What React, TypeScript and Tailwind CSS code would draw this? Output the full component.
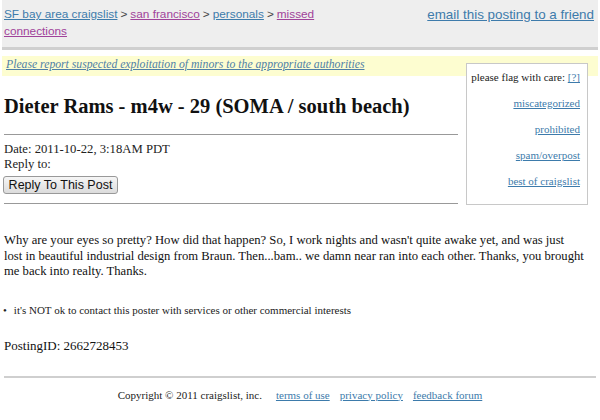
import React from 'react';

const serif = { fontFamily: '"Liberation Serif", "Times New Roman", serif' };

function Crumb({ children, visited = false }: { children: React.ReactNode; visited?: boolean }) {
  return <a className={visited ? 'underline text-[#a0429a]' : 'underline text-[#3d7bab]'}>{children}</a>;
}

function Sep() {
  return <span className="mx-[3px]">&gt;</span>;
}

const flagLinks = ['miscategorized', 'prohibited', 'spam/overpost', 'best of craigslist'];

export default function App() {
  return (
    <div className="relative w-[600px] h-[420px] overflow-hidden bg-white text-[#222]" style={serif}>
      <div className="mx-[2px] flex justify-between bg-[#eeeeee] border-b-[3px] border-[#cfcfcf] pl-[2px] pr-[4px] pt-[6px] h-[50px] font-['Liberation_Sans',Arial,sans-serif] leading-[17px] text-[#444]">
        <div className="w-[330px] text-[11.8px]">
          <div>
            <Crumb>SF bay area craigslist</Crumb>
            <Sep />
            <Crumb visited>san francisco</Crumb>
            <Sep />
            <Crumb>personals</Crumb>
            <Sep />
            <Crumb visited>missed</Crumb>
          </div>
          <div>
            <Crumb visited>connections</Crumb>
          </div>
        </div>
        <div className="text-[13.4px]">
          <Crumb>email this posting to a friend</Crumb>
        </div>
      </div>

      <div className="mx-[2px] mt-[6px] h-[20px] bg-[#fdfdd0] pl-[4px] pt-[2px] text-[11.7px] italic leading-[14px]">
        <a className="underline text-[#4f7fa6]">Please report suspected exploitation of minors to the appropriate authorities</a>
      </div>

      <div className="absolute left-[466px] top-[63px] w-[122px] h-[142px] border border-[#c8c8c8] bg-white pr-[7px] pt-[6px] text-right text-[11px] leading-[14px]">
        <div className="text-[#222]">
          please flag with care: <a className="underline text-[#3d7bab]">[?]</a>
        </div>
        <div className="mt-[12px] flex flex-col gap-[12px]">
          {flagLinks.map((l) => (
            <a key={l} className="underline text-[#3d7bab]">
              {l}
            </a>
          ))}
        </div>
      </div>

      <div className="px-[4px]">
        <h2 className="mt-[17px] w-[454px] text-[20.5px] font-bold leading-[26px] text-[#111]">Dieter Rams - m4w - 29 (SOMA / south beach)</h2>
        <hr className="mt-[15px] w-[454px] border-t border-[#999]" />
        <div className="mt-[7px] text-[12.7px] leading-[15px]">Date: 2011-10-22, 3:18AM PDT</div>
        <div className="text-[12.7px] leading-[15px]">Reply to:</div>
        <button className="mt-[1px] ml-[-1px] h-[18px] w-[115px] rounded-[3px] border border-[#999] bg-gradient-to-b from-[#f6f6f6] to-[#dcdcdc] font-['Liberation_Sans',Arial,sans-serif] text-[12.5px] leading-[16px] text-[#111]">
          Reply To This Post
        </button>
        <hr className="mt-[7px] w-[454px] border-t border-[#999]" />

        <p className="mt-[29px] whitespace-nowrap text-[12.65px] leading-[15.5px] text-[#111]">
          Why are your eyes so pretty? How did that happen? So, I work nights and wasn't quite awake yet, and was just
          <br />
          lost in beautiful industrial design from Braun. Then...bam.. we damn near ran into each other. Thanks, you brought
          <br />
          me back into realty. Thanks.
        </p>

        <ul className="mt-[23px] text-[11px] leading-[14px]">
          <li className="flex gap-[7px]">
            <span className="ml-[-1px]">•</span>
            <span>it's NOT ok to contact this poster with services or other commercial interests</span>
          </li>
        </ul>

        <div className="mt-[21px] text-[13px] leading-[16px] text-[#111]">PostingID: 2662728453</div>

        <hr className="mt-[22px] border-t-2 border-[#cfcfcf]" />

        <div className="mt-[10px] flex justify-center gap-[10px] text-[11px] leading-[14px] text-[#222]">
          <span className="mr-[4px]">Copyright © 2011 craigslist, inc.</span>
          <a className="underline text-[#3d7bab]">terms of use</a>
          <a className="underline text-[#3d7bab]">privacy policy</a>
          <a className="underline text-[#3d7bab]">feedback forum</a>
        </div>
      </div>
    </div>
  );
}
